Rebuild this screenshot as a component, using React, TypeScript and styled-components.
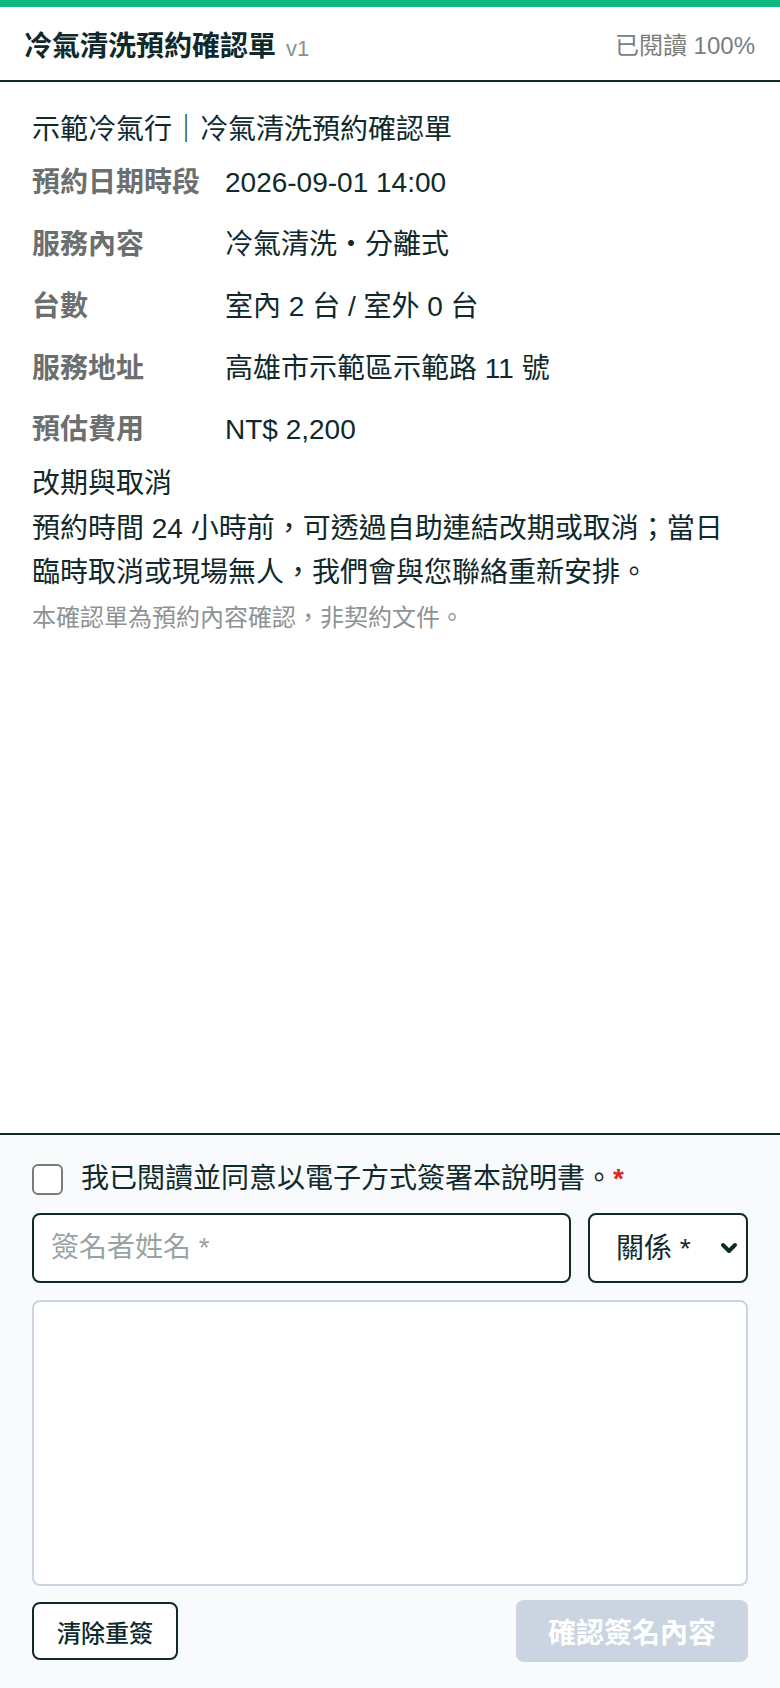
import styled, { createGlobalStyle } from 'styled-components';
import { ChevronDown } from 'lucide-react';

const GlobalStyle = createGlobalStyle`
  html, body {
    margin: 0;
    padding: 0;
    background: #ffffff;
  }
  body {
    font-family: 'Liberation Sans', 'Noto Sans CJK TC', sans-serif;
    color: #10292b;
  }
  * {
    box-sizing: border-box;
  }
`;

const Page = styled.div`
  min-height: 100vh;
  display: flex;
  flex-direction: column;
  border-top: 7px solid #10b981;
`;

const Header = styled.header`
  height: 75px;
  display: flex;
  align-items: center;
  justify-content: space-between;
  padding: 0 25px 0 24px;
  border-bottom: 2px solid #10292b;
`;

const Title = styled.h1`
  margin: 0;
  display: flex;
  align-items: baseline;
  gap: 10px;
  font-size: 28px;
  font-weight: 700;
  color: #10292b;
`;

const Version = styled.span`
  font-size: 22px;
  font-weight: 500;
  color: #8b9090;
`;

const Progress = styled.span`
  font-size: 24px;
  color: #7a7e7e;
`;

const Content = styled.main`
  flex: 1;
  padding: 26px 32px 0;
  font-size: 28px;
  line-height: 1.6;
  color: #10292b;
`;

const Lead = styled.p`
  margin: 0;
`;

const InfoList = styled.dl`
  margin: 0;
  display: grid;
  grid-template-columns: 176px 1fr;
  column-gap: 17px;
`;

const Label = styled.dt`
  padding: 8.5px 0;
  font-weight: 700;
  color: #6b6f6f;
`;

const Value = styled.dd`
  margin: 0;
  padding: 8.5px 0;
`;

const SectionTitle = styled.h2`
  margin: 0;
  font-size: 28px;
  font-weight: 400;
`;

const Paragraph = styled.p`
  margin: 0;
`;

const Note = styled.p`
  margin: 3px 0 0;
  font-size: 24px;
  color: #8d9292;
`;

const Panel = styled.section`
  border-top: 2px solid #10292b;
  background: #f8fafc;
  padding: 22px 32px 26px;
  display: flex;
  flex-direction: column;
`;

const AgreeRow = styled.label`
  display: flex;
  align-items: center;
  gap: 18px;
  font-size: 28px;
  line-height: 1.6;
  color: #10292b;
`;

const Checkbox = styled.input`
  appearance: none;
  margin: 0;
  width: 31px;
  height: 31px;
  border: 2px solid #777c7c;
  border-radius: 6px;
  background: #ffffff;
  flex-shrink: 0;
`;

const Required = styled.span`
  color: #dc2626;
  font-weight: 700;
`;

const FieldRow = styled.div`
  display: grid;
  grid-template-columns: 1fr 160px;
  gap: 17px;
  margin-top: 11px;
`;

const NameInput = styled.input`
  height: 70px;
  width: 100%;
  border: 2px solid #10292b;
  border-radius: 8px;
  padding: 0 17px;
  font-family: inherit;
  font-size: 28px;
  color: #10292b;
  background: #ffffff;
  &::placeholder {
    color: #9aa3a3;
  }
`;

const SelectWrap = styled.div`
  position: relative;
  color: #10292b;
  svg {
    position: absolute;
    right: 7px;
    top: 50%;
    transform: translateY(-50%);
    pointer-events: none;
  }
`;

const Select = styled.select`
  appearance: none;
  width: 100%;
  height: 70px;
  border: 2px solid #10292b;
  border-radius: 8px;
  padding: 0 40px 0 26px;
  font-family: inherit;
  font-size: 28px;
  color: #10292b;
  background: #ffffff;
`;

const SignaturePad = styled.div`
  margin-top: 17px;
  height: 286px;
  background: #ffffff;
  border: 2px solid #cbd5e1;
  border-radius: 8px;
`;

const Actions = styled.div`
  display: flex;
  justify-content: space-between;
  align-items: center;
  margin-top: 14px;
`;

const ClearButton = styled.button`
  height: 58px;
  padding: 0 23px;
  border: 2px solid #10292b;
  border-radius: 8px;
  background: #ffffff;
  font-family: inherit;
  font-size: 24px;
  font-weight: 500;
  color: #10292b;
`;

const ConfirmButton = styled.button`
  height: 62px;
  width: 232px;
  border: none;
  border-radius: 8px;
  background: #cbd5e1;
  font-family: inherit;
  font-size: 28px;
  font-weight: 700;
  color: #ffffff;
`;

const details = [
  { label: '預約日期時段', value: '2026-09-01 14:00' },
  { label: '服務內容', value: '冷氣清洗・分離式' },
  { label: '台數', value: '室內 2 台 / 室外 0 台' },
  { label: '服務地址', value: '高雄市示範區示範路 11 號' },
  { label: '預估費用', value: 'NT$ 2,200' },
];

const App = () => {
  return (
    <>
      <GlobalStyle />
      <Page>
        <Header>
          <Title>
            冷氣清洗預約確認單 <Version>v1</Version>
          </Title>
          <Progress>已閱讀 100%</Progress>
        </Header>
        <Content>
          <Lead>示範冷氣行｜冷氣清洗預約確認單</Lead>
          <InfoList>
            {details.flatMap((d) => [
              <Label key={d.label}>{d.label}</Label>,
              <Value key={d.label + '-v'}>{d.value}</Value>,
            ])}
          </InfoList>
          <SectionTitle>改期與取消</SectionTitle>
          <Paragraph>
            預約時間 24 小時前，可透過自助連結改期或取消；當日臨時取消或現場無人，我們會與您聯絡重新安排。
          </Paragraph>
          <Note>本確認單為預約內容確認，非契約文件。</Note>
        </Content>
        <Panel>
          <AgreeRow>
            <Checkbox type='checkbox' />
            <span>
              我已閱讀並同意以電子方式簽署本說明書。<Required>*</Required>
            </span>
          </AgreeRow>
          <FieldRow>
            <NameInput placeholder='簽名者姓名 *' />
            <SelectWrap>
              <Select defaultValue=''>
                <option value=''>關係 *</option>
                <option value='self'>本人</option>
                <option value='family'>家屬</option>
                <option value='agent'>代理人</option>
              </Select>
              <ChevronDown size={24} strokeWidth={4} />
            </SelectWrap>
          </FieldRow>
          <SignaturePad />
          <Actions>
            <ClearButton>清除重簽</ClearButton>
            <ConfirmButton disabled>確認簽名內容</ConfirmButton>
          </Actions>
        </Panel>
      </Page>
    </>
  );
};

export default App;
